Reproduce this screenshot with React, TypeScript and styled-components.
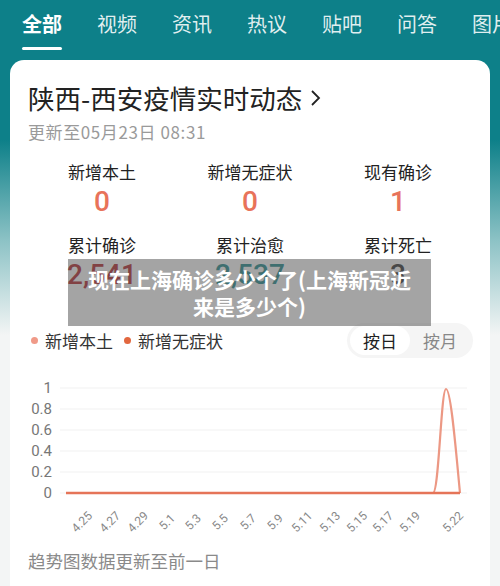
import React from 'react';
import styled, { createGlobalStyle } from 'styled-components';

const GlobalStyle = createGlobalStyle`
    html, body {
        margin: 0;
        padding: 0;
        height: 586px;
        overflow: hidden;
    }
    body {
        font-family: "Noto Sans CJK SC", "Noto Sans", sans-serif;
        background: linear-gradient(
            180deg,
            #0d8089 0px,
            #0d8089 140px,
            #8cc2c5 240px,
            #f3f5f5 335px,
            #f3f5f5 100%
        );
    }
`;

const Page = styled.div`
    width: 500px;
    height: 586px;
    overflow: hidden;
`;

const Tabs = styled.nav`
    display: flex;
    gap: 35px;
    padding: 0 0 0 22px;
    height: 60px;
    white-space: nowrap;
    overflow: hidden;
`;

const Tab = styled.div<{ $active?: boolean }>`
    position: relative;
    flex: none;
    font-size: 20px;
    line-height: 48px;
    color: ${(p) => (p.$active ? '#ffffff' : 'rgba(255, 255, 255, 0.88)')};
    font-weight: ${(p) => (p.$active ? 700 : 400)};
    height: 52px;

    &::after {
        content: '';
        display: ${(p) => (p.$active ? 'block' : 'none')};
        position: absolute;
        left: 0;
        right: 0;
        top: 47px;
        height: 3px;
        border-radius: 2px;
        background: #ffffff;
    }
`;

const Card = styled.section`
    position: relative;
    margin: 0 10px;
    background: #ffffff;
    border-radius: 14px 14px 0 0;
    padding: 22px 18px 30px;
    height: 600px;
`;

const Title = styled.h1`
    margin: 0;
    font-size: 26.5px;
    line-height: 32px;
    font-weight: 400;
    color: #222;
    display: flex;
    align-items: center;
    gap: 6px;
`;

const Updated = styled.div`
    margin-top: 7px;
    font-size: 17px;
    line-height: 22px;
    color: #9a9a9a;
    letter-spacing: 0.6px;
`;

const StatsGrid = styled.div`
    display: grid;
    grid-template-columns: repeat(3, 1fr);
    row-gap: 18px;
    margin-top: 19px;
`;

const Stat = styled.div`
    display: flex;
    flex-direction: column;
    align-items: center;
`;

const StatLabel = styled.div`
    font-size: 17px;
    line-height: 20px;
    color: #222;
`;

const StatValue = styled.div<{ $color: string }>`
    margin-top: 5px;
    font-family: Roboto, "Noto Sans", sans-serif;
    font-size: 28px;
    line-height: 30px;
    font-weight: 500;
    color: ${(p) => p.$color};
`;

const Overlay = styled.div`
    position: absolute;
    left: 58px;
    top: 199px;
    width: 363px;
    height: 67px;
    box-sizing: border-box;
    padding: 0 12px;
    background: rgba(90, 90, 90, 0.55);
    display: flex;
    align-items: center;
    justify-content: center;
    text-align: center;
    color: #ffffff;
    font-size: 21px;
    line-height: 27px;
    font-weight: 700;
`;

const LegendRow = styled.div`
    display: flex;
    align-items: center;
    justify-content: space-between;
    margin-top: 33px;
`;

const Legend = styled.div`
    display: flex;
    align-items: center;
    gap: 11px;
    padding-left: 3px;
`;

const LegendItem = styled.div<{ $dot: string }>`
    display: flex;
    align-items: center;
    gap: 7px;
    font-size: 17px;
    color: #333;

    &::before {
        content: '';
        width: 7px;
        height: 7px;
        border-radius: 50%;
        background: ${(p) => p.$dot};
    }
`;

const Toggle = styled.div`
    display: flex;
    align-items: center;
    height: 35px;
    padding: 3px;
    box-sizing: border-box;
    border-radius: 18px;
    background: #f5f5f5;
    margin-right: -1px;
`;

const ToggleOption = styled.div<{ $active?: boolean }>`
    width: 60px;
    height: 29px;
    line-height: 29px;
    text-align: center;
    border-radius: 15px;
    font-size: 17px;
    color: ${(p) => (p.$active ? '#222' : '#888')};
    background: ${(p) => (p.$active ? '#ffffff' : 'transparent')};
`;

const Chart = styled.svg`
    display: block;
    margin-top: 14px;
    overflow: visible;
`;

const Footer = styled.div`
    margin-top: 4px;
    font-size: 17.5px;
    line-height: 24px;
    color: #8a8a8a;
`;

const stats = [
    { label: '新增本土', value: '0', color: '#e8735a' },
    { label: '新增无症状', value: '0', color: '#e8735a' },
    { label: '现有确诊', value: '1', color: '#e8735a' },
    { label: '累计确诊', value: '2,541', color: '#b3262b' },
    { label: '累计治愈', value: '2,537', color: '#1f8a8c' },
    { label: '累计死亡', value: '3', color: '#333333' },
];

const tabs = ['全部', '视频', '资讯', '热议', '贴吧', '问答', '图片'];

const yTicks = [
    { label: '1', y: 16 },
    { label: '0.8', y: 37 },
    { label: '0.6', y: 58 },
    { label: '0.4', y: 79 },
    { label: '0.2', y: 100 },
    { label: '0', y: 121 },
];

const xTicks: [string, number][] = [
    ['4.25', 82],
    ['4.27', 110],
    ['4.29', 138],
    ['5.1', 167],
    ['5.3', 193],
    ['5.5', 220],
    ['5.7', 248],
    ['5.9', 275],
    ['5.11', 302],
    ['5.13', 330],
    ['5.15', 357],
    ['5.17', 383],
    ['5.19', 410],
    ['5.22', 453],
];

const TrendChart: React.FC = () => (
    <Chart width={444} height={173} viewBox="0 0 444 173">
        {yTicks.map((t) => (
            <g key={t.label}>
                <line x1={32} x2={439} y1={t.y} y2={t.y} stroke="#f1f1f1" strokeWidth={1} />
                <text
                    x={24}
                    y={t.y + 5}
                    textAnchor="end"
                    fontSize={15}
                    fill="#777"
                    fontFamily="Roboto, sans-serif"
                >
                    {t.label}
                </text>
            </g>
        ))}
        <path
            d="M405 121 C411 121 413 17 418 17 C423 17 428 80 432 121"
            fill="none"
            stroke="#ec9884"
            strokeWidth={2.2}
        />
        <line x1={38} x2={432} y1={121} y2={121} stroke="#e57458" strokeWidth={2.4} />
        {xTicks.map(([label, cx]) => (
            <text
                key={label}
                x={cx - 28}
                y={154}
                textAnchor="middle"
                fontSize={12}
                fill="#888"
                fontFamily="Roboto, sans-serif"
                transform={`rotate(-45 ${cx - 28} 150)`}
            >
                {label}
            </text>
        ))}
    </Chart>
);

const App: React.FC = () => (
    <Page>
        <GlobalStyle />
        <Tabs>
            {tabs.map((t, i) => (
                <Tab key={t} $active={i === 0}>
                    {t}
                </Tab>
            ))}
        </Tabs>
        <Card>
            <Title>
                陕西-西安疫情实时动态
                <svg width="16" height="22" viewBox="0 0 16 22">
                    <path d="M4 4 L11 11 L4 18" fill="none" stroke="#222" strokeWidth={1.8} />
                </svg>
            </Title>
            <Updated>更新至05月23日 08:31</Updated>
            <StatsGrid>
                {stats.map((s) => (
                    <Stat key={s.label}>
                        <StatLabel>{s.label}</StatLabel>
                        <StatValue $color={s.color}>{s.value}</StatValue>
                    </Stat>
                ))}
            </StatsGrid>
            <Overlay>现在上海确诊多少个了(上海新冠近来是多少个)</Overlay>
            <LegendRow>
                <Legend>
                    <LegendItem $dot="#f09a88">新增本土</LegendItem>
                    <LegendItem $dot="#e2673f">新增无症状</LegendItem>
                </Legend>
                <Toggle>
                    <ToggleOption $active>按日</ToggleOption>
                    <ToggleOption>按月</ToggleOption>
                </Toggle>
            </LegendRow>
            <TrendChart />
            <Footer>趋势图数据更新至前一日</Footer>
        </Card>
    </Page>
);

export default App;
